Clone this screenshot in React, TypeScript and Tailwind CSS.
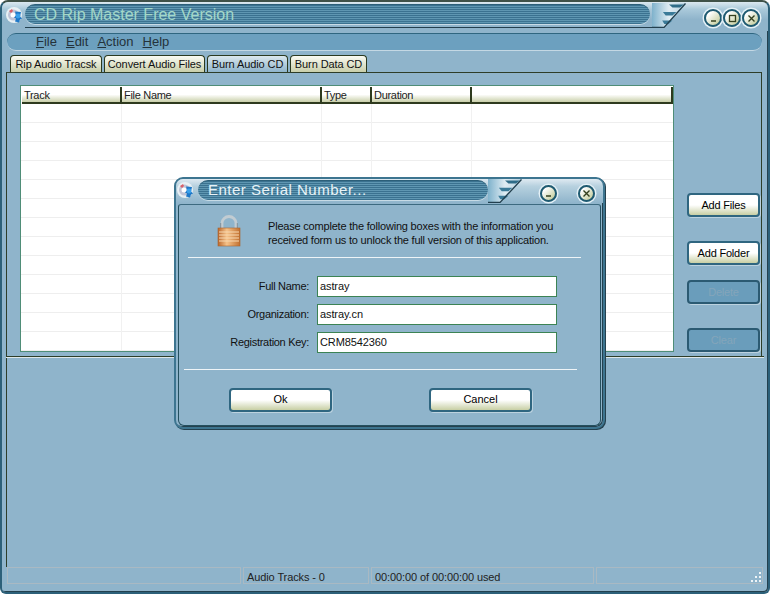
import React from "react";

const font = { fontFamily: '"Liberation Sans", Arial, sans-serif' };

function AppIcon() {
  return (
    <svg width="18" height="18" viewBox="0 0 18 18" className="shrink-0 block">
      <circle cx="8" cy="9" r="8" fill="#e8f0f4" />
      <circle cx="7.5" cy="9" r="5.5" fill="#bfc3d6" />
      <circle cx="7" cy="9" r="2.5" fill="#fff" />
      <path d="M9 5.5l6 .5-1 4.5 2 2-2 1-1 3-4-1 1-3-2-1 2-2z" fill="#1e78c8" />
      <circle cx="12" cy="10" r="2.4" fill="#3aa0ea" />
      <path d="M3 5l3-2 1 2-2 2z" fill="#d9606a" />
    </svg>
  );
}

function Slant({ w, h, id }: { w: number; h: number; id: string }) {
  const x1 = w - 21 - 1;
  return (
    <svg width={w} height={h} viewBox={`0 0 ${w} ${h}`} className="shrink-0 block">
      <defs>
        <linearGradient id={id} x1="0" y1="0" x2="1" y2="0">
          <stop offset="0" stopColor="#7fb2cc" />
          <stop offset="0.5" stopColor="#dfecf3" />
          <stop offset="1" stopColor="#b5d0df" />
        </linearGradient>
      </defs>
      <path d={`M0 0H${w}L${x1} ${h}H0z`} fill={`url(#${id})`} />
      <path d={`M${w * 0.5} 1.5h${w * 0.44}l-4 3h-${w * 0.22}z`} fill="#2f6c88" />
      <path d={`M${w * 0.32} ${h * 0.36}h${w * 0.4}l-4 3.5h-${w * 0.2}z`} fill="#3a7a98" />
      <path d={`M${w * 0.3} ${h * 0.7}h${w * 0.3}l-4 3.5h-${w * 0.12}z`} fill="#3a7a98" />
      <path d={`M0 ${h - 0.5}H${x1}L${w - 0.5} 0.5`} stroke="#23404f" strokeWidth="1.3" fill="none" />
    </svg>
  );
}

function CircleBtn({ glyph, size = 18 }: { glyph: "min" | "max" | "close"; size?: number }) {
  return (
    <div
      className="rounded-full bg-gradient-to-br from-[#ffffff] from-20% to-[#bcc68f] border-2 border-[#1f5a70] flex items-center justify-center shrink-0 shadow-[0_0_0_1.5px_#e4f0f6]"
      style={{ width: size, height: size }}
    >
      <svg width="9" height="9" viewBox="0 0 9 9" className="block">
        {glyph === "min" && <path d="M2 7h5" stroke="#34401f" strokeWidth="1.4" />}
        {glyph === "max" && <rect x="1.5" y="1.5" width="6" height="6" fill="none" stroke="#34401f" strokeWidth="1.3" />}
        {glyph === "close" && <path d="M1.5 1.5l6 6M7.5 1.5l-6 6" stroke="#34401f" strokeWidth="1.4" />}
      </svg>
    </div>
  );
}

const stripes =
  "bg-[repeating-linear-gradient(180deg,#3b7290_0px,#3b7290_1px,#5f97b2_1px,#5f97b2_2px)]";

function Tab({ label, active, w }: { label: string; active?: boolean; w: string }) {
  return (
    <div
      className={`${w} h-[17px] rounded-t-[4px] border border-b-0 border-[#2b3a20] text-[11px] tracking-[-0.1px] leading-[16px] text-center text-[#111] whitespace-nowrap bg-gradient-to-b ${
        active ? "from-[#dbe8ee] to-[#8fb4cb]" : "from-[#fbfbf3] to-[#c9cfab]"
      }`}
    >
      {label}
    </div>
  );
}

function Head({ label, w }: { label: string; w: string }) {
  return (
    <div className={`${w} h-[17px] pl-[2px] text-[11px] tracking-[-0.3px] leading-[16px] text-[#222] border-r-2 border-b-2 border-[#2e3a1e] bg-gradient-to-b from-[#ffffff] from-50% to-[#c9cfa9]`}>
      {label}
    </div>
  );
}

function SideBtn({ label, disabled, className = "" }: { label: string; disabled?: boolean; className?: string }) {
  return disabled ? (
    <div className={`w-[73px] h-[24px] rounded-[4px] border-2 border-[#2b5a72] bg-[#6a9dbb] text-[11px] tracking-[-0.2px] leading-[20px] text-center text-[#84a5ba] shadow-[1px_1px_0_#bcd2df] ${className}`}>
      {label}
    </div>
  ) : (
    <div className={`w-[73px] h-[24px] rounded-[4px] border-2 border-[#2f6680] bg-gradient-to-b from-[#ffffff] from-50% to-[#c8cfa4] text-[11px] tracking-[-0.2px] leading-[20px] text-center text-black shadow-[1px_1px_0_#bcd2df] ${className}`}>
      {label}
    </div>
  );
}

function Field({ label, value }: { label: string; value: string }) {
  return (
    <div className="flex items-center h-[21px]">
      <div className="w-[127px] text-right text-[11px] tracking-[-0.3px] text-[#111]">{label}</div>
      <div className="ml-[8px] w-[240px] h-[21px] bg-white border border-[#3c8354] pl-[2px] text-[11px] tracking-[-0.1px] leading-[18px] text-[#111]">
        {value}
      </div>
    </div>
  );
}

function Lock() {
  return (
    <svg width="24" height="32" viewBox="0 0 24 32" className="block">
      <defs>
        <linearGradient id="lk" x1="0" y1="0" x2="1" y2="0">
          <stop offset="0" stopColor="#b9662c" />
          <stop offset="0.4" stopColor="#f6c38a" />
          <stop offset="1" stopColor="#c2702f" />
        </linearGradient>
      </defs>
      <path d="M5 13V8a7 6.5 0 0 1 14 0v5" fill="none" stroke="#c2ccd2" strokeWidth="2.8" />
      <path d="M3.7 13V8" stroke="#76838c" strokeWidth="0.8" />
      <path d="M20.3 13V8" stroke="#76838c" strokeWidth="0.8" />
      <rect x="1" y="13" width="22" height="18" fill="url(#lk)" stroke="#a8612e" strokeWidth="0.6" />
      <path d="M2 17h20M2 20h20M2 23h20M2 26h20" stroke="#f8d9b2" strokeWidth="1" />
    </svg>
  );
}

function Dialog() {
  return (
    <div
      className="absolute left-[172px] top-[175px] w-[431px] h-[252px] rounded-[9px] bg-[#8fb4cb] border-2 border-[#3d7590] shadow-[inset_-1px_-1px_0_#24414f,1px_1px_0_#24414f]"
      style={font}
    >
      <div className="flex items-start h-[24px] bg-gradient-to-b from-[#dfeaf1] to-[#8fb4cb] from-0% via-[#b7d1df] via-30% rounded-t-[7px]">
        <div className="ml-[1px] mt-[2px]"><AppIcon /></div>
        <div className={`ml-[3px] mt-[1px] w-[290px] h-[20px] rounded-[10px] ${stripes} text-[15px] leading-[17px] tracking-[0.5px] text-[#e9f3f7] pl-[10px] border-t border-[#2c5f78] shadow-[0_1px_0_#c7dbe6]`}>
          Enter Serial Number...
        </div>
        <Slant w={34} h={24} id="sl2" />
        <div className="ml-[18px] mt-[6px]"><CircleBtn glyph="min" size={17} /></div>
        <div className="ml-[21px] mt-[6px]"><CircleBtn glyph="close" size={17} /></div>
      </div>
      <div className="mx-[2px] h-[222px] mt-[1px] rounded-t-[3px] rounded-b-[6px] border border-[#24505f] border-t-[#3d6a80] flex flex-col">
        <div className="flex h-[47px] items-start">
          <div className="ml-[38px] mt-[10px]"><Lock /></div>
          <div className="ml-[27px] mt-[15px] text-[11px] tracking-[-0.2px] leading-[13.5px] text-[#111] whitespace-nowrap">
            Please complete the following boxes with the information you
            <br />
            received form us to unlock the full version of this application.
          </div>
        </div>
        <div className="ml-[9px] w-[393px] h-px bg-[#eef4f7] mt-[5px]" />
        <div className="ml-[3px] mt-[18px] flex flex-col gap-[7px]">
          <Field label="Full Name:" value="astray" />
          <Field label="Organization:" value="astray.cn" />
          <Field label="Registration Key:" value="CRM8542360" />
        </div>
        <div className="ml-[5px] w-[393px] h-px bg-[#eef4f7] mt-[16px]" />
        <div className="flex ml-[50px] mt-[18px] gap-[97px]">
          {["Ok", "Cancel"].map((t) => (
            <div key={t} className="w-[103px] h-[24px] rounded-[4px] border-2 border-[#2f6680] bg-gradient-to-b from-[#ffffff] from-50% to-[#c8cfa4] text-[11px] leading-[19px] text-center text-black shadow-[1px_1px_0_#bcd2df]">
              {t}
            </div>
          ))}
        </div>
      </div>
    </div>
  );
}

export default function App() {
  return (
    <div
      className="relative w-[770px] h-[594px] overflow-hidden bg-[#8fb4cb] rounded-t-[8px] rounded-b-[6px] border-2 border-[#2c6079] border-t-[#3f5148] shadow-[inset_-1px_-1px_0_#24414f]"
      style={font}
    >
      {/* title bar */}
      <div className="flex items-start h-[29px] pt-[1px] bg-gradient-to-b from-[#dce9f0] from-0% via-[#aac9da] via-25% to-[#8fb4cb] to-60%">
        <div className="ml-[4px] mt-[3px]"><AppIcon /></div>
        <div className="ml-[1px] flex items-start">
          <div className="w-[627px] h-[25px] border-b border-[#23404f]">
            <div className={`w-[625px] h-[20px] mt-[1px] rounded-[10px] ${stripes} border-t border-[#2c5f78] shadow-[0_1px_0_#c7dbe6] text-[16px] leading-[19px] text-[#a4d8c8] pl-[9px]`}>
              CD Rip Master Free Version
            </div>
          </div>
          <Slant w={34} h={25} id="sl1" />
        </div>
        <div className="ml-[18px] mt-[6px] flex gap-[1px]">
          <CircleBtn glyph="min" />
          <CircleBtn glyph="max" />
          <CircleBtn glyph="close" />
        </div>
      </div>
      {/* menu */}
      <div className="ml-[5px] mt-[2px] w-[755px] h-[18px] rounded-[9px] bg-[#6ca0bf] border-t border-t-[#2f6680] border-b border-b-[#c4d8e4] flex items-center pl-[29px] gap-[9px] text-[13px] text-[#24323a]">
        <span><u>F</u>ile</span>
        <span><u>E</u>dit</span>
        <span><u>A</u>ction</span>
        <span><u>H</u>elp</span>
      </div>
      {/* tabs */}
      <div className="flex ml-[8px] mt-[4px] gap-[2px] relative z-10">
        <Tab label="Rip Audio Tracsk" w="w-[92px]" />
        <Tab label="Convert Audio Files" w="w-[101px]" />
        <Tab label="Burn Audio CD" w="w-[81px]" active />
        <Tab label="Burn Data CD" w="w-[77px]" />
      </div>
      {/* tab panel */}
      <div className="ml-[4px] w-[756px] h-[284px] border-t border-r border-l border-[#2d3d28] flex">
        <div className="ml-[13px] mt-[12px] w-[654px] h-[267px] bg-white border border-[#4f8d77] flex flex-col">
          <div className="flex ml-px mt-px">
            <Head label="Track" w="w-[100px]" />
            <Head label="File Name" w="w-[200px]" />
            <Head label="Type" w="w-[50px]" />
            <Head label="Duration" w="w-[100px]" />
            <Head label="" w="w-[201px]" />
          </div>
          <div className="flex-1 relative bg-[repeating-linear-gradient(180deg,#ffffff_0px,#ffffff_18px,#eeeeee_18px,#eeeeee_19px)]">
            <div className="absolute left-[100px] top-0 bottom-0 w-px bg-[#f1f1f1]" />
            <div className="absolute left-[300px] top-0 bottom-0 w-px bg-[#f1f1f1]" />
            <div className="absolute left-[350px] top-0 bottom-0 w-px bg-[#f1f1f1]" />
            <div className="absolute left-[450px] top-0 bottom-0 w-px bg-[#f1f1f1]" />
          </div>
        </div>
        <div className="ml-[13px] mt-[120px] flex flex-col">
          <SideBtn label="Add Files" />
          <SideBtn label="Add Folder" className="mt-[24px]" />
          <SideBtn label="Delete" disabled className="mt-[15px]" />
          <SideBtn label="Clear" disabled className="mt-[24px]" />
        </div>
      </div>
      <div className="mx-[4px] h-[2px] bg-[#dfe8ea] border-t border-[#2d3d28]" />
      <div className="h-[209px] ml-[4px] border-l border-[#2d3d28]" />
      {/* status */}
      <div className="flex ml-[5px] gap-[2px] h-[17px] text-[11px] tracking-[-0.1px] leading-[18px] text-[#222]">
        {[
          ["w-[234px]", ""],
          ["w-[126px]", "Audio Tracks - 0"],
          ["w-[223px]", "00:00:00 of 00:00:00 used"],
          ["w-[167px]", ""],
        ].map(([w, t], i) => (
          <div key={i} className={`${w} border border-[#a9b9c3] pl-[3px] relative`}>
            {t}
            {i === 3 && (
              <svg width="12" height="12" viewBox="0 0 12 12" className="absolute right-0 bottom-0">
                <path d="M9 1h2v2H9zM5 5h2v2H5zM9 5h2v2H9zM1 9h2v2H1zM5 9h2v2H5zM9 9h2v2H9z" fill="#eef4f7" />
              </svg>
            )}
          </div>
        ))}
      </div>
      <Dialog />
    </div>
  );
}
